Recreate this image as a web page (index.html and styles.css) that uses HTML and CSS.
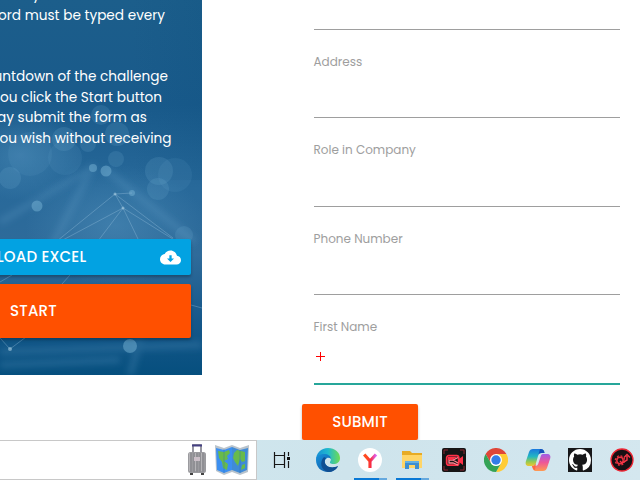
FILE: index.html
```html
<!DOCTYPE html>
<html lang="en">
<head>
<meta charset="utf-8">
<title>Challenge form</title>
<link rel="stylesheet" href="styles.css">
</head>
<body>
<main class="page">
  <aside class="panel">
    <svg class="network" viewBox="0 0 202 375" aria-hidden="true">
      <defs>
        <linearGradient id="base" x1="0" y1="0" x2="0" y2="1"><stop offset="0" stop-color="#1c5e8b"/><stop offset=".28" stop-color="#195a8b"/><stop offset=".5" stop-color="#28699a"/><stop offset=".68" stop-color="#2f6b9a"/><stop offset=".86" stop-color="#15578a"/><stop offset="1" stop-color="#064f7e"/></linearGradient>
        <linearGradient id="edge"><stop offset=".65" stop-color="#084b78" stop-opacity="0"/><stop offset="1" stop-color="#084b78" stop-opacity=".15"/></linearGradient>
        <radialGradient id="glow"><stop offset="0" stop-color="#5b9bc5" stop-opacity=".4"/><stop offset="1" stop-color="#5b9bc5" stop-opacity="0"/></radialGradient>
        <filter id="soft"><feGaussianBlur stdDeviation="3"/></filter>
      </defs>
      <rect width="202" height="375" fill="url(#base)"/>
      <rect width="202" height="180" fill="url(#edge)"/>
      <ellipse cx="20" cy="155" rx="65" ry="45" fill="url(#glow)"/>
      <ellipse cx="115" cy="225" rx="90" ry="60" fill="url(#glow)"/>
      <g fill="none" stroke="#6ba6cd" stroke-opacity=".22" stroke-width="7" filter="url(#soft)"><path d="M106 170 195 242M92 168 50 250M95 166 0 222M130 375 140 340M0 352 202 345M0 365 120 360"/></g>
      <g fill="#79b3d6" fill-opacity=".17">
        <circle cx="101" cy="115" r="10"/><circle cx="64" cy="139" r="12"/><circle cx="88" cy="144" r="8"/><circle cx="117" cy="134" r="12"/><circle cx="116" cy="159" r="8"/><circle cx="65" cy="158" r="17" fill-opacity=".1"/><circle cx="30" cy="154" r="22" fill-opacity=".1"/><circle cx="10" cy="178" r="11"/><circle cx="159" cy="171" r="14"/><circle cx="175" cy="175" r="17" fill-opacity=".1"/><circle cx="158" cy="189" r="11"/><circle cx="184" cy="235" r="9"/>
      </g>
      <g fill="#76b1d3" fill-opacity=".5"><circle cx="93" cy="168" r="4"/><circle cx="106" cy="171" r="5.5"/><circle cx="37" cy="206" r="5.5"/><circle cx="132" cy="193" r="3"/><circle cx="130" cy="346" r="7"/></g>
      <g fill="none" stroke="#93bed9" stroke-opacity=".38"><path d="M115 194 57 241M115 194 123 208 176 241M115 194 173 238M123 208 61 241M123 208 98 241M123 208 139 241M115 194 132 193M0 338 10 349 26 337M0 282 12 275M62 284 70 275M191 305 202 308"/></g>
      <g fill="#a8cde1" fill-opacity=".6"><circle cx="115" cy="194" r="1.5"/><circle cx="123" cy="208" r="1.5"/><circle cx="10" cy="349" r="2"/></g>
    </svg>
    <div class="copy">
      <p class="l0">fy where each</p>
      <p class="l1">ord must be typed every</p>
      <p class="gap"></p>
      <p class="l2">untdown of the challenge</p>
      <p class="l3">ou click the Start button</p>
      <p class="l4">ay submit the form as</p>
      <p class="l5">ou wish without receiving</p>
    </div>
    <div class="actions">
      <button class="btn download"><span>LOAD EXCEL</span><svg width="21" height="21" viewBox="0 0 24 24"><path fill="#fff" d="M19.35 10.04C18.67 6.59 15.64 4 12 4 9.11 4 6.6 5.64 5.35 8.04 2.34 8.36 0 10.91 0 14c0 3.31 2.69 6 6 6h13c2.76 0 5-2.24 5-5 0-2.64-2.05-4.78-4.65-4.96zM16 13l-4 4-4-4h2.700V9.500h2.600V13z"/></svg></button>
      <button class="btn start"><span>START</span></button>
    </div>
  </aside>
  <form class="form">
    <div class="field first"></div>
    <div class="field"><label class="address">Address</label></div>
    <div class="field tall"><label class="role">Role in Company</label></div>
    <div class="field"><label class="phone">Phone Number</label></div>
    <div class="field focus"><label class="name">First Name</label><i class="cross"></i></div>
    <button type="button" class="btn submit"><span>SUBMIT</span></button>
  </form>
</main>
<footer class="taskbar">
  <div class="search">
    <svg class="case" width="20" height="34" viewBox="0 0 20 34"><path d="M6 10V2h8v8" fill="none" stroke="#777783" stroke-width="1.5"/><path d="M5 1.500h10v2H5z" fill="#454083"/><rect x="1" y="9" width="18" height="21" rx="2.500" fill="#9b9b9f"/><path d="M4 10v19M7 10v19M10 10v19M13 10v19M16 10v19" stroke="#85858a"/><path d="M2.500 10v18M8.500 10v18M14.500 10v18" stroke="#b6b5b8"/><rect x="7" y="14" width="6" height="4" fill="#cbbfc8"/><path d="M3 30h3v2H3zM14 30h3v2h-3z" fill="#444"/></svg>
    <svg class="map" width="34" height="32" viewBox="0 0 34 32"><path d="m0 1 9 3 8-3 8 3 9-3-1 27-8 3-8-3-8 3-8-4z" fill="#b9c3cc"/><path d="m1 4 8 2 8-3v23l-8 3-7-3z" fill="#3c8ff0"/><path d="m17 3 8 3 8-2-1 22-7 3-8-3z" fill="#408bd6"/><path d="m3 7 6 1 5-2 1 3-3 3 1 3-4 2 4 3-1 6-4-2-1-6-3-4zM19 9l3-3 8 2v9l-3 1-2-3-2 7-3-4-2-4zM27 21l3-1v4l-4 2z" fill="#68ba4b"/><path d="M9 5v24M25 6v23" stroke="#286fb5" opacity=".4"/></svg>
  </div>
  <nav class="apps">
    <div class="app"><svg width="24" height="24" viewBox="0 0 24 24" fill="none" stroke="#151515" stroke-width="1.200"><path d="M4.500 4v3.500h10V4M4.500 20v-3.500h10V20M4.500 7.500v9M14.500 7.500v9M18.500 4v4M18.500 13v7"/><path d="M17 9h3v3h-3z" fill="#111" stroke="none"/></svg></div>
    <div class="app"><svg width="26" height="26" viewBox="0 0 26 26"><defs><linearGradient id="e1"><stop stop-color="#168ed5"/><stop offset=".5" stop-color="#20b9cf"/><stop offset="1" stop-color="#70dc52"/></linearGradient><linearGradient id="e2" x1="0" y1="0" x2="1" y2="1"><stop stop-color="#1591db"/><stop offset="1" stop-color="#14519b"/></linearGradient></defs><path d="M1 13C1 6 6 1 13 1c7 0 12 4.500 12 10 0 4-3 6-6.500 6-3 0-4.500-1-3-3 1-1.500.5-5-5-6C6 7.500 2 9.500 1 13z" fill="url(#e1)"/><path d="M1 13c0-4 4-6 8-6 4 0 7 2 7 5-3-3-7 0-6 4 1 4 7 6 13 3-2 4-6 6-10 6C6 25 1 20 1 13z" fill="url(#e2)"/><path d="M9 10c-5 5-3 13 4 15 4 0 8-2 10-6-6 3-12 1-13-3-.6-2 0-4 1-5z" fill="#104f92"/></svg></div>
    <div class="app run"><svg width="24" height="24" viewBox="0 0 24 24"><defs><linearGradient id="y1"><stop offset=".25" stop-color="#ff4b20"/><stop offset=".55" stop-color="#f82c42"/><stop offset="1" stop-color="#de64f5"/></linearGradient></defs><circle cx="12" cy="12" r="12" fill="#fff"/><path d="M6.200 6.500 12 13l6-6.500M12 13v7" fill="none" stroke="url(#y1)" stroke-width="3.200"/></svg></div>
    <div class="app run"><svg width="22" height="22" viewBox="0 0 22 22"><path d="M1 2h8l2 2h10v15H1z" fill="#e7ab25"/><path d="M1 6h20v13H1z" fill="#ffd567"/><path d="M4 20v-8h14v8h-4v-4H8v4z" fill="#3e8ed0"/><path d="M4 12h14v2H4z" fill="#62b0e4"/></svg></div>
    <div class="app"><svg width="24" height="24" viewBox="0 0 24 24"><rect width="24" height="24" rx="2" fill="#151515"/><path d="M2 6V2h4M18 2h4v4M2 18v4h4M22 18v4h-4" fill="none" stroke="#8d2730"/><rect x="4.700" y="7.700" width="12" height="9.500" rx="2" fill="none" stroke="#ff3148" stroke-width="1.800"/><path d="m17 11 4-3v9l-4-3z" fill="#ff3148"/><path d="m16 9.500-5 2.500H7v3h4l5 2M11 12l5 3" fill="none" stroke="#ff8793" stroke-width="1.300"/><path d="M6 9h9l-5 3H6z" fill="#ff3148"/></svg></div>
    <div class="app"><svg width="24" height="24" viewBox="0 0 24 24"><path d="M12 6h10.400A12 12 0 0 1 12 24l5.200-9z" fill="#ffcc35"/><path d="M1.600 6 6.800 15 12 12V6h10.400A12 12 0 0 0 1.600 6z" fill="#df4638"/><path d="M1.600 6 6.800 15A6 6 0 0 0 17.200 15L12 24A12 12 0 0 1 1.600 6z" fill="#34a356"/><circle cx="12" cy="12" r="6" fill="#fff"/><circle cx="12" cy="12" r="4.700" fill="#347de8"/></svg></div>
    <div class="app"><svg width="26" height="24" viewBox="0 0 26 24"><defs><linearGradient id="c1" x2="0" y2="1"><stop stop-color="#1978df"/><stop offset=".45" stop-color="#22b7c2"/><stop offset=".75" stop-color="#97ca50"/><stop offset="1" stop-color="#edc832"/></linearGradient><linearGradient id="c2" x2="0" y2="1"><stop stop-color="#a15de8"/><stop offset=".5" stop-color="#ee5797"/><stop offset="1" stop-color="#ff9a50"/></linearGradient></defs><path d="M8 1h8c2 0 3 1 3.500 4h-3c-2 0-3 1-3.500 3l-2 7c-.5 2-2 3-4 3H4c-3 0-4-2-3-5L4 4c.7-2 2-3 4-3z" fill="url(#c1)"/><path d="M18 6h4c3 0 4 2 3 5l-3 9c-.7 2-2 3-4 3h-7c-2 0-3-1-4-5h3c2 0 3-1 3.500-3l2-6c.5-2 1-3 2.500-3z" fill="url(#c2)"/><path d="M15 1c3 0 4 1 4.500 4h-3c-2 0-3 1-3.500 3z" fill="#1850b9"/><path d="M7 18c2 0 3-1 4-3l-1 7c-2 0-2-2-3-4z" fill="#ff6940"/></svg></div>
    <div class="app"><svg width="24" height="24" viewBox="0 0 24 24"><path fill="#171719" d="M0 0h24v24H0z"/><path transform="translate(1 1) scale(1.375)" fill="#fff" d="M8 0C3.580 0 0 3.580 0 8c0 3.540 2.290 6.530 5.470 7.590.4.070.55-.17.55-.38v-1.490c-2.010.37-2.530-.49-2.690-.94-.09-.23-.48-.94-.82-1.130-.28-.15-.68-.52-.01-.53.63-.01 1.080.58 1.230.82.72 1.210 1.870.87 2.330.66.07-.52.28-.87.51-1.070-1.780-.2-3.640-.89-3.640-3.950 0-.87.31-1.590.82-2.150-.08-.2-.36-1.020.08-2.120 0 0 .67-.21 2.200.82a7.600 7.600 0 0 1 4 0c1.530-1.040 2.200-.82 2.200-.82.44 1.100.16 1.920.08 2.120.51.56.82 1.270.82 2.150 0 3.070-1.870 3.750-3.650 3.950.29.25.54.73.54 1.480v2.200c0 .21.15.46.55.38A8 8 0 0 0 16 8c0-4.420-3.580-8-8-8z"/></svg></div>
    <div class="app"><svg width="24" height="24" viewBox="0 0 24 24"><circle cx="12" cy="12" r="11" fill="#171014" stroke="#ed2634" stroke-width="1.300"/><circle cx="10" cy="12.500" r="3.200" fill="none" stroke="#eb3240" stroke-width="1.500"/><circle cx="10" cy="12.500" r="4.700" fill="none" stroke="#eb3240" stroke-width="1.300" stroke-dasharray="2 1.690"/><path d="m10 13 2 2 5-3V8M14 9.500l3-3 3 3" fill="none" stroke="#f93849" stroke-width="1.400"/></svg></div>
  </nav>
</footer>
</body>
</html>
```
FILE: styles.css
```css
* { box-sizing: border-box; }
body { margin: 0; width: 640px; height: 480px; overflow: hidden; background: #fff; font-family: Poppins, Inter, "Liberation Sans", sans-serif; }
p { margin: 0; }
.page { display: flex; height: 440px; overflow: hidden; }
.panel { position: relative; width: 202px; height: 375px; overflow: hidden; flex: none; color: #fff; }
.network { position: absolute; inset: 0; width: 202px; height: 375px; }
.copy { position: relative; height: 239px; margin-top: -15px; font-size: 13.650px; line-height: 20.500px; white-space: nowrap; }
.copy p { height: 20.500px; }
.copy .gap { height: 41px; }
.copy .l0 { margin-left: 28px; }
.copy .l1 { margin-left: -2px; }
.copy .l2 { margin-left: -6.500px; }
.copy .l3 { margin-left: 0; }
.copy .l4 { margin-left: -3px; }
.copy .l5 { margin-left: -.5px; }
.actions { position: relative; display: flex; flex-direction: column; gap: 9px; margin: 15px 0 0 -10px; width: 201px; }
.btn { display: flex; align-items: center; border: 0; border-radius: 2px; color: #fff; font: 500 15px/20px Poppins, Inter, "Liberation Sans", sans-serif; letter-spacing: .2px; box-shadow: 0 2px 3px #0004; white-space: nowrap; }
.download { justify-content: space-between; height: 36px; background: #02a2e2; padding: 0 10px 0 7px; }
.start { height: 54px; padding: 0 20px; background: #ff5000; }
.form { width: 318px; margin-left: 100px; }
.field { width: 306px; height: 88px; margin-left: 12px; padding-top: 23px; border-bottom: 1px solid #9e9e9e; color: #9e9e9e; font-size: 12px; line-height: 18px; }
.field.first { height: 30px; }
.field.tall { height: 89px; }
.field.focus { height: 90px; border-bottom: 2px solid #26a69a; }
.field label { display: block; margin-left: -.5px; }
.cross { display: block; width: 9px; height: 9px; margin: 16px 0 0 2px; background: linear-gradient(#f00, #f00) 4px 0 / 1px 9px no-repeat, linear-gradient(#f00, #f00) 0 4px / 9px 1px no-repeat; }
.submit { justify-content: center; width: 116px; height: 36px; margin-top: 19px; background: #ff5000; }
.taskbar { display: flex; height: 40px; background: linear-gradient(110deg, #d0e8ef, #cee4ec 55%, #d4e7ef); }
.search { display: flex; align-items: center; width: 257px; flex: none; border: 1px solid #c8c8c8; border-left: 0; background: #fff; }
.case { margin-left: 187px; }
.map { margin-left: 8px; }
.apps { display: flex; width: 383px; padding-left: 2px; overflow: hidden; }
.app { display: flex; align-items: center; justify-content: center; width: 42px; height: 40px; flex: none; }
.app:first-child { width: 48px; padding-right: 2px; }
.run { background: linear-gradient(90deg, #0878d5 25px, #65a9de 25px) 5px 38px / 33px 2px no-repeat; }
```
